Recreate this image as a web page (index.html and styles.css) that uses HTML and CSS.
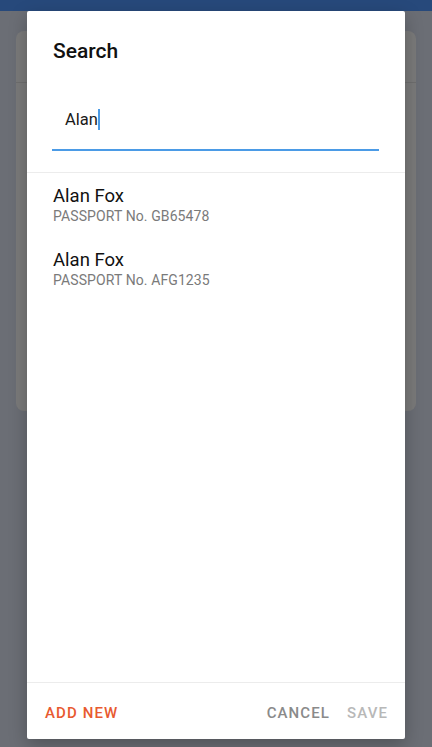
FILE: index.html
```html
<!DOCTYPE html>
<html lang="en">
<head>
<meta charset="utf-8">
<title>Search</title>
<link rel="stylesheet" href="styles.css">
</head>
<body>
<div class="page">
  <div class="appbar"></div>
  <div class="bgcard">
    <div class="bgcard-head"></div>
  </div>
</div>
<div class="dialog">
  <h1 class="title">Search</h1>
  <div class="field"><span class="value">Alan</span><span class="caret"></span></div>
  <div class="divider"></div>
  <ul class="results">
    <li class="item">
      <div class="name">Alan Fox</div>
      <div class="sub">PASSPORT No. GB65478</div>
    </li>
    <li class="item">
      <div class="name">Alan Fox</div>
      <div class="sub">PASSPORT No. AFG1235</div>
    </li>
  </ul>
  <div class="divider"></div>
  <div class="actions">
    <span class="btn btn-add">ADD NEW</span>
    <span class="spacer"></span>
    <span class="btn btn-cancel">CANCEL</span>
    <span class="btn btn-save">SAVE</span>
  </div>
</div>
</body>
</html>
```
FILE: styles.css
```css
html, body {
  margin: 0;
  padding: 0;
}
body {
  width: 432px;
  height: 747px;
  overflow: hidden;
  background: #6b6e75;
  font-family: Roboto, "Liberation Sans", sans-serif;
  position: relative;
}
.page {
  display: flex;
  flex-direction: column;
}
.appbar {
  height: 11px;
  background: #27497b;
}
.bgcard {
  margin: 20px 16px 0 16px;
  height: 380px;
  background: #7a7a7a;
  border-radius: 8px;
}
.bgcard-head {
  height: 51px;
  border-bottom: 1px solid #6e6e6e;
}
.dialog {
  position: absolute;
  top: 11px;
  left: 27px;
  width: 378px;
  height: 728px;
  background: #ffffff;
  border-radius: 2px;
  box-shadow: 0 6px 18px rgba(0, 0, 0, 0.25);
  display: flex;
  flex-direction: column;
}
.title {
  margin: 0;
  padding: 26px 26px 0 26px;
  font-size: 21px;
  line-height: 28px;
  font-weight: 500;
  color: #111111;
}
.field {
  margin: 44px 26px 0 25px;
  padding: 0 0 19px 13px;
  border-bottom: 2px solid #4b9be6;
  font-size: 16.5px;
  line-height: 20px;
  color: #1a1a1a;
  display: flex;
  align-items: center;
}
.caret {
  display: inline-block;
  width: 2px;
  height: 21px;
  background: #4b9be6;
}
.divider {
  height: 1px;
  background: #ececec;
}
.field + .divider {
  margin-top: 21px;
}
.results {
  list-style: none;
  margin: 0;
  padding: 0;
  flex: 1;
}
.item {
  padding: 12px 26px 12px 26px;
}
.name {
  font-size: 18.5px;
  line-height: 22px;
  color: #111111;
}
.sub {
  font-size: 14px;
  line-height: 18px;
  letter-spacing: 0.1px;
  color: #7a7a7a;
}
.actions {
  display: flex;
  align-items: center;
  gap: 17px;
  padding: 20px 17px 16px 18px;
}
.spacer {
  flex: 1;
}
.btn {
  font-size: 15px;
  line-height: 20px;
  font-weight: 500;
  letter-spacing: 1.1px;
}
.btn-add {
  color: #e85a30;
}
.btn-cancel {
  color: #8a8a8a;
}
.btn-save {
  color: #b8b8b8;
}
```
